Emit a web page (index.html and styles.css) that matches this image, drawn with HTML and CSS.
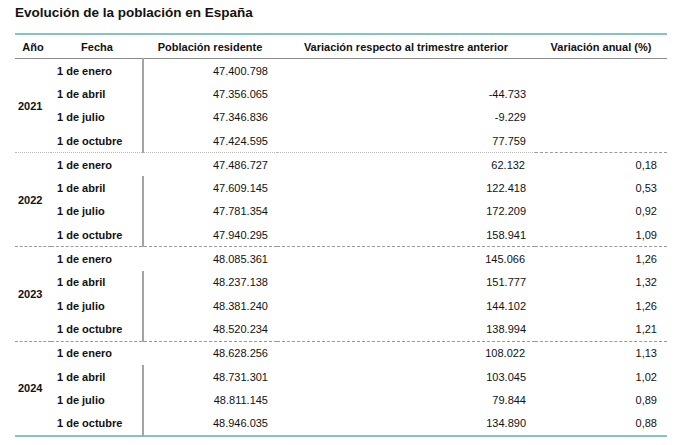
FILE: index.html
```html
<!DOCTYPE html>
<html lang="es">
<head>
<meta charset="utf-8">
<link rel="stylesheet" href="styles.css">
</head>
<body>
<div class="page">
  <h1 class="title">Evolución de la población en España</h1>
  <table class="data">
    <colgroup>
      <col class="c-year"><col class="c-date"><col class="c-pop"><col class="c-var"><col class="c-ann">
    </colgroup>
    <thead>
      <tr><th>Año</th><th>Fecha</th><th>Población residente</th><th>Variación respecto al trimestre anterior</th><th>Variación anual (%)</th></tr>
    </thead>
    <tbody>
      <tr><td class="year" rowspan="4">2021</td><td class="date">1 de enero</td><td class="num pop">47.400.798</td><td class="num"></td><td class="num"></td></tr>
      <tr><td class="date">1 de abril</td><td class="num pop">47.356.065</td><td class="num">-44.733</td><td class="num"></td></tr>
      <tr><td class="date">1 de julio</td><td class="num pop">47.346.836</td><td class="num">-9.229</td><td class="num"></td></tr>
      <tr><td class="date">1 de octubre</td><td class="num pop">47.424.595</td><td class="num">77.759</td><td class="num"></td></tr>

      <tr class="sep-dot"><td class="year" rowspan="4">2022</td><td class="date">1 de enero</td><td class="num">47.486.727</td><td class="num">62.132</td><td class="num last">0,18</td></tr>
      <tr><td class="date">1 de abril</td><td class="num pop">47.609.145</td><td class="num">122.418</td><td class="num">0,53</td></tr>
      <tr><td class="date">1 de julio</td><td class="num pop">47.781.354</td><td class="num">172.209</td><td class="num">0,92</td></tr>
      <tr><td class="date">1 de octubre</td><td class="num pop">47.940.295</td><td class="num">158.941</td><td class="num">1,09</td></tr>

      <tr class="sep-dash"><td class="year" rowspan="4">2023</td><td class="date">1 de enero</td><td class="num">48.085.361</td><td class="num">145.066</td><td class="num">1,26</td></tr>
      <tr><td class="date">1 de abril</td><td class="num pop">48.237.138</td><td class="num">151.777</td><td class="num">1,32</td></tr>
      <tr><td class="date">1 de julio</td><td class="num pop">48.381.240</td><td class="num">144.102</td><td class="num">1,26</td></tr>
      <tr><td class="date">1 de octubre</td><td class="num pop">48.520.234</td><td class="num">138.994</td><td class="num">1,21</td></tr>

      <tr class="sep-dash"><td class="year" rowspan="4">2024</td><td class="date">1 de enero</td><td class="num">48.628.256</td><td class="num">108.022</td><td class="num">1,13</td></tr>
      <tr><td class="date">1 de abril</td><td class="num pop">48.731.301</td><td class="num">103.045</td><td class="num">1,02</td></tr>
      <tr><td class="date">1 de julio</td><td class="num pop">48.811.145</td><td class="num">79.844</td><td class="num">0,89</td></tr>
      <tr><td class="date">1 de octubre</td><td class="num pop">48.946.035</td><td class="num">134.890</td><td class="num">0,88</td></tr>
    </tbody>
  </table>
</div>
</body>
</html>
```
FILE: styles.css
```css
html, body {
  margin: 0;
  padding: 0;
  background: #ffffff;
}

.page {
  padding: 5px 0 0 15px;
  font-family: "Liberation Sans", Arial, sans-serif;
  color: #111;
}

.title {
  margin: 0;
  font-size: 13.5px;
  line-height: 16px;
  font-weight: bold;
  color: #111;
}

.data {
  margin-top: 12px;
  width: 652px;
  border-collapse: collapse;
  table-layout: fixed;
  font-size: 11px;
  border-top: 2px solid #86c3c1;
  border-bottom: 2px solid #86c3c1;
}

.c-year { width: 36px; }
.c-date { width: 92px; }
.c-pop { width: 134px; }
.c-var { width: 258px; }
.c-ann { width: 132px; }

.data th {
  height: 23px;
  padding: 0;
  font-weight: bold;
  text-align: center;
  vertical-align: middle;
  border-bottom: 1px solid #8c8c8c;
}

.data td {
  height: 23.3px;
  padding: 0;
  vertical-align: middle;
  white-space: nowrap;
}

.data td.year {
  font-weight: bold;
  text-align: left;
  padding-left: 3px;
}

.data td.date {
  font-weight: bold;
  padding-left: 6px;
}

.data td.num {
  text-align: right;
  padding-right: 10px;
}

.data td.pop {
  border-left: 2px solid #a4a4a4;
  padding-right: 9px;
}

.data td:nth-child(3) {
  padding-right: 9px;
}

.sep-dot td {
  border-top: 1px dotted #b8b8b8;
}

.sep-dot td.last {
  border-top: 1px dashed #9a9a9a;
}

.sep-dash td {
  border-top: 1px dashed #9a9a9a;
}
```
